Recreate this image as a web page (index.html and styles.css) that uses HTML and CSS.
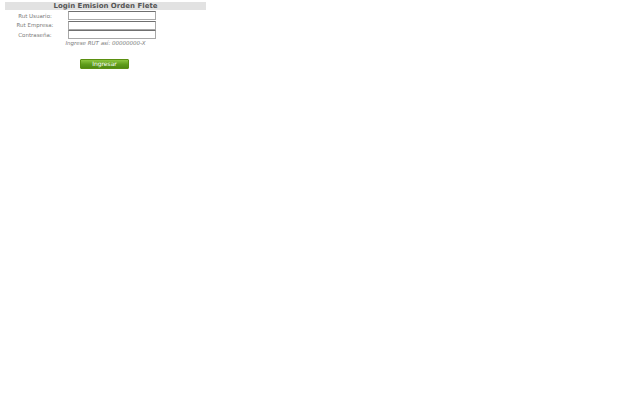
FILE: index.html
```html
<!DOCTYPE html>
<html lang="es">
<head>
<meta charset="utf-8">
<title>Login Emision Orden Flete</title>
<link rel="stylesheet" href="styles.css">
</head>
<body>
<div class="login">
  <div class="title">Login Emision Orden Flete</div>
  <div class="row">
    <label class="lbl" for="ru">Rut Usuario:</label>
    <input class="inp" id="ru" type="text">
  </div>
  <div class="row">
    <label class="lbl" for="re">Rut Empresa:</label>
    <input class="inp" id="re" type="text">
  </div>
  <div class="row">
    <label class="lbl" for="pw">Contraseña:</label>
    <input class="inp" id="pw" type="password">
  </div>
  <div class="hint">Ingrese RUT así: 00000000-X</div>
  <div class="actions">
    <button class="btn" type="button">Ingresar</button>
  </div>
</div>
</body>
</html>
```

FILE: styles.css
```css
html, body {
  margin: 0;
  padding: 0;
  background: #ffffff;
}
body {
  font-family: "DejaVu Sans", sans-serif;
  color: #555555;
  padding: 2px 5px;
}
.login {
  width: 201px;
  display: flex;
  flex-direction: column;
}
.title {
  background: #e2e2e2;
  height: 8px;
  line-height: 8px;
  font-size: 7px;
  font-weight: bold;
  text-align: center;
  color: #555555;
  margin-bottom: 1px;
}
.row {
  display: flex;
  align-items: center;
  height: 9.5px;
}
.lbl {
  width: 60px;
  font-size: 5.5px;
  text-align: center;
  color: #7a7a7a;
}
.inp {
  box-sizing: border-box;
  margin: 0 0 0 3px;
  width: 88px;
  height: 9px;
  padding: 0;
  border: 1px solid #a8a8a8;
  border-top-color: #707070;
  background: #ffffff;
}
.hint {
  font-size: 5.5px;
  font-style: italic;
  text-align: center;
  color: #7a7a7a;
  margin-top: 0;
  line-height: 6px;
}
.actions {
  display: flex;
  justify-content: center;
  padding-top: 13px;
  padding-right: 2px;
}
.btn {
  width: 49px;
  height: 10px;
  padding: 0;
  border: 1px solid #5a8f10;
  border-radius: 1px;
  background: linear-gradient(#8cc63f, #5f9d1a 55%, #4f8a12);
  color: #ffffff;
  font-family: "DejaVu Sans", sans-serif;
  font-size: 6px;
  line-height: 8px;
}
```
